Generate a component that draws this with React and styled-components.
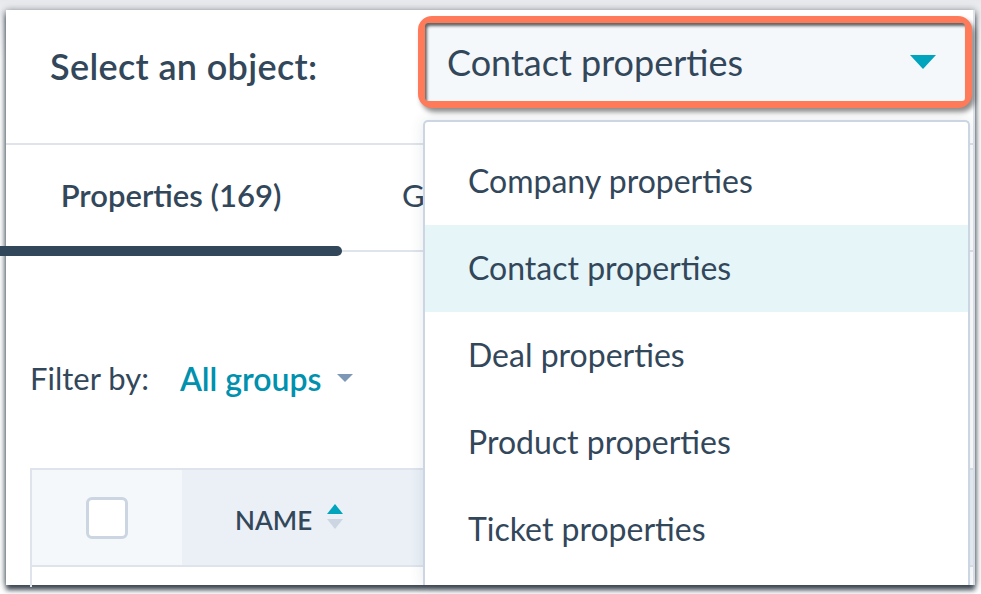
import React from "react";
import styled, { createGlobalStyle } from "styled-components";

const Global = createGlobalStyle`
  html, body { margin: 0; padding: 0; background: #fff; }
  body { font-family: Lato, "Open Sans", sans-serif; color: #33475b; }
  * { box-sizing: border-box; }
`;

const Page = styled.div`
  width: 981px;
  height: 594px;
  overflow: hidden;
  background: linear-gradient(#e6e8eb, #f2f3f5 20px, #ffffff 60px);
  padding: 10px 6px 9px 6px;
`;

const Card = styled.div`
  position: relative;
  width: 100%;
  height: 100%;
  background: #fff;
  border-right: 2px solid #dfe3eb;
  box-shadow: 0 5px 5px rgba(35, 46, 58, 0.85), -3px 0 5px rgba(60, 70, 80, 0.25), 3px 0 5px rgba(60, 70, 80, 0.2), 0 -3px 6px rgba(60, 70, 80, 0.1);
`;

const Header = styled.div`
  height: 135px;
  display: flex;
  align-items: flex-start;
  border-bottom: 2px solid #dfe3eb;
`;

const Label = styled.div`
  width: 412px;
  padding-left: 44px;
  height: 92px;
  margin-top: 6px;
  display: flex;
  align-items: center;
  font-size: 36px;
  font-weight: 600;
  letter-spacing: 0.35px;
  padding-top: 8px;
`;

const Highlight = styled.div`
  margin-top: 6px;
  width: 554px;
  height: 92px;
  border: 7px solid #ff7a59;
  border-radius: 14px;
  box-shadow: 3px 4px 5px rgba(0, 0, 0, 0.45);
  background: #ff7a59;
`;

const SelectBox = styled.div`
  height: 100%;
  background: #f5f8fa;
  border-radius: 3px;
  box-shadow: inset 2px 3px 3px rgba(0, 0, 0, 0.6);
  display: flex;
  align-items: center;
  justify-content: space-between;
  padding: 0 29px 0 22px;
  font-size: 36px;
  color: #33475b;
`;

const Caret = styled.span`
  width: 0;
  height: 0;
  border-left: ${(p) => p.$size}px solid transparent;
  border-right: ${(p) => p.$size}px solid transparent;
  border-top: ${(p) => Math.round(p.$size * 1.05)}px solid ${(p) => p.$color};
  display: inline-block;
`;

const Tabs = styled.div`
  height: 107px;
  display: flex;
  border-bottom: 2px solid #dfe3eb;
  margin-left: -6px;
`;

const Tab = styled.div`
  width: ${(p) => p.$width}px;
  position: relative;
  display: flex;
  align-items: center;
  justify-content: ${(p) => (p.$active ? "center" : "flex-start")};
  padding-left: ${(p) => (p.$active ? 0 : 60)}px;
  font-size: 31px;
  font-weight: ${(p) => (p.$active ? 600 : 400)};
  padding-bottom: 6px;
  &::after {
    content: "";
    display: ${(p) => (p.$active ? "block" : "none")};
    position: absolute;
    left: 0;
    right: 0;
    bottom: -6px;
    height: 10px;
    background: #33475b;
    border-radius: 0 5px 5px 0;
  }
`;

const FilterRow = styled.div`
  display: flex;
  align-items: center;
  padding-left: 24px;
  height: 60px;
  margin-top: 96px;
  font-size: 31px;
`;

const FilterLabel = styled.span`
  margin-right: 31px;
`;

const FilterLink = styled.span`
  color: #0091ae;
  font-weight: 600;
  font-size: 32px;
  margin-right: 15px;
`;

const Table = styled.div`
  margin-left: 24px;
  margin-top: 60px;
  border-top: 2px solid #dfe3eb;
  border-left: 2px solid #dfe3eb;
`;

const HeadRow = styled.div`
  display: flex;
  height: 97px;
  border-bottom: 2px solid #dfe3eb;
`;

const CheckCell = styled.div`
  width: 150px;
  background: #f5f8fa;
  display: flex;
  align-items: center;
  justify-content: center;
`;

const Checkbox = styled.div`
  width: 42px;
  height: 42px;
  border: 3px solid #cbd6e2;
  border-radius: 6px;
  background: #fff;
`;

const NameCell = styled.div`
  flex: 1;
  background: #eaf0f6;
  display: flex;
  align-items: center;
  padding-left: 53px;
  padding-top: 4px;
  font-size: 26px;
  font-weight: 600;
`;

const SortIcon = styled.span`
  display: inline-flex;
  flex-direction: column;
  gap: 5px;
  margin-left: 15px;
  margin-top: -6px;
`;

const Tri = styled.span`
  width: 0;
  height: 0;
  border-left: 8px solid transparent;
  border-right: 8px solid transparent;
  ${(p) => (p.$up ? `border-bottom: 10px solid ${p.$color};` : `border-top: 10px solid ${p.$color};`)}
`;

const BodyRow = styled.div`
  height: 20px;
`;

const Menu = styled.div`
  position: absolute;
  left: 417px;
  top: 110px;
  width: 547px;
  height: 465px;
  background: #fff;
  border: 2px solid #cbd6e2;
  border-bottom: none;
  border-radius: 5px 5px 0 0;
  box-shadow: 0 0 14px rgba(45, 62, 80, 0.12);
  padding-top: 16px;
`;

const MenuItem = styled.div`
  height: 87px;
  display: flex;
  align-items: center;
  padding-left: 43px;
  font-size: 32px;
  background: ${(p) => (p.$active ? "#e5f5f8" : "transparent")};
  padding-bottom: 2px;
`;

const items = [
  "Company properties",
  "Contact properties",
  "Deal properties",
  "Product properties",
  "Ticket properties",
];

export default function App() {
  return (
    <>
      <Global />
      <Page>
        <Card>
          <Header>
            <Label>Select an object:</Label>
            <Highlight>
              <SelectBox>
                <span>Contact properties</span>
                <Caret $size={13} $color="#00a4bd" />
              </SelectBox>
            </Highlight>
          </Header>
          <Tabs>
            <Tab $width={342} $active>Properties (169)</Tab>
            <Tab $width={240}>Groups</Tab>
          </Tabs>
          <FilterRow>
            <FilterLabel>Filter by:</FilterLabel>
            <FilterLink>All groups</FilterLink>
            <Caret $size={8} $color="#7c98b6" />
          </FilterRow>
          <Table>
            <HeadRow>
              <CheckCell>
                <Checkbox />
              </CheckCell>
              <NameCell>
                NAME
                <SortIcon>
                  <Tri $up $color="#00a4bd" />
                  <Tri $color="#cbd6e2" />
                </SortIcon>
              </NameCell>
            </HeadRow>
            <BodyRow />
          </Table>
          <Menu>
            {items.map((t) => (
              <MenuItem key={t} $active={t === "Contact properties"}>
                {t}
              </MenuItem>
            ))}
          </Menu>
        </Card>
      </Page>
    </>
  );
}
